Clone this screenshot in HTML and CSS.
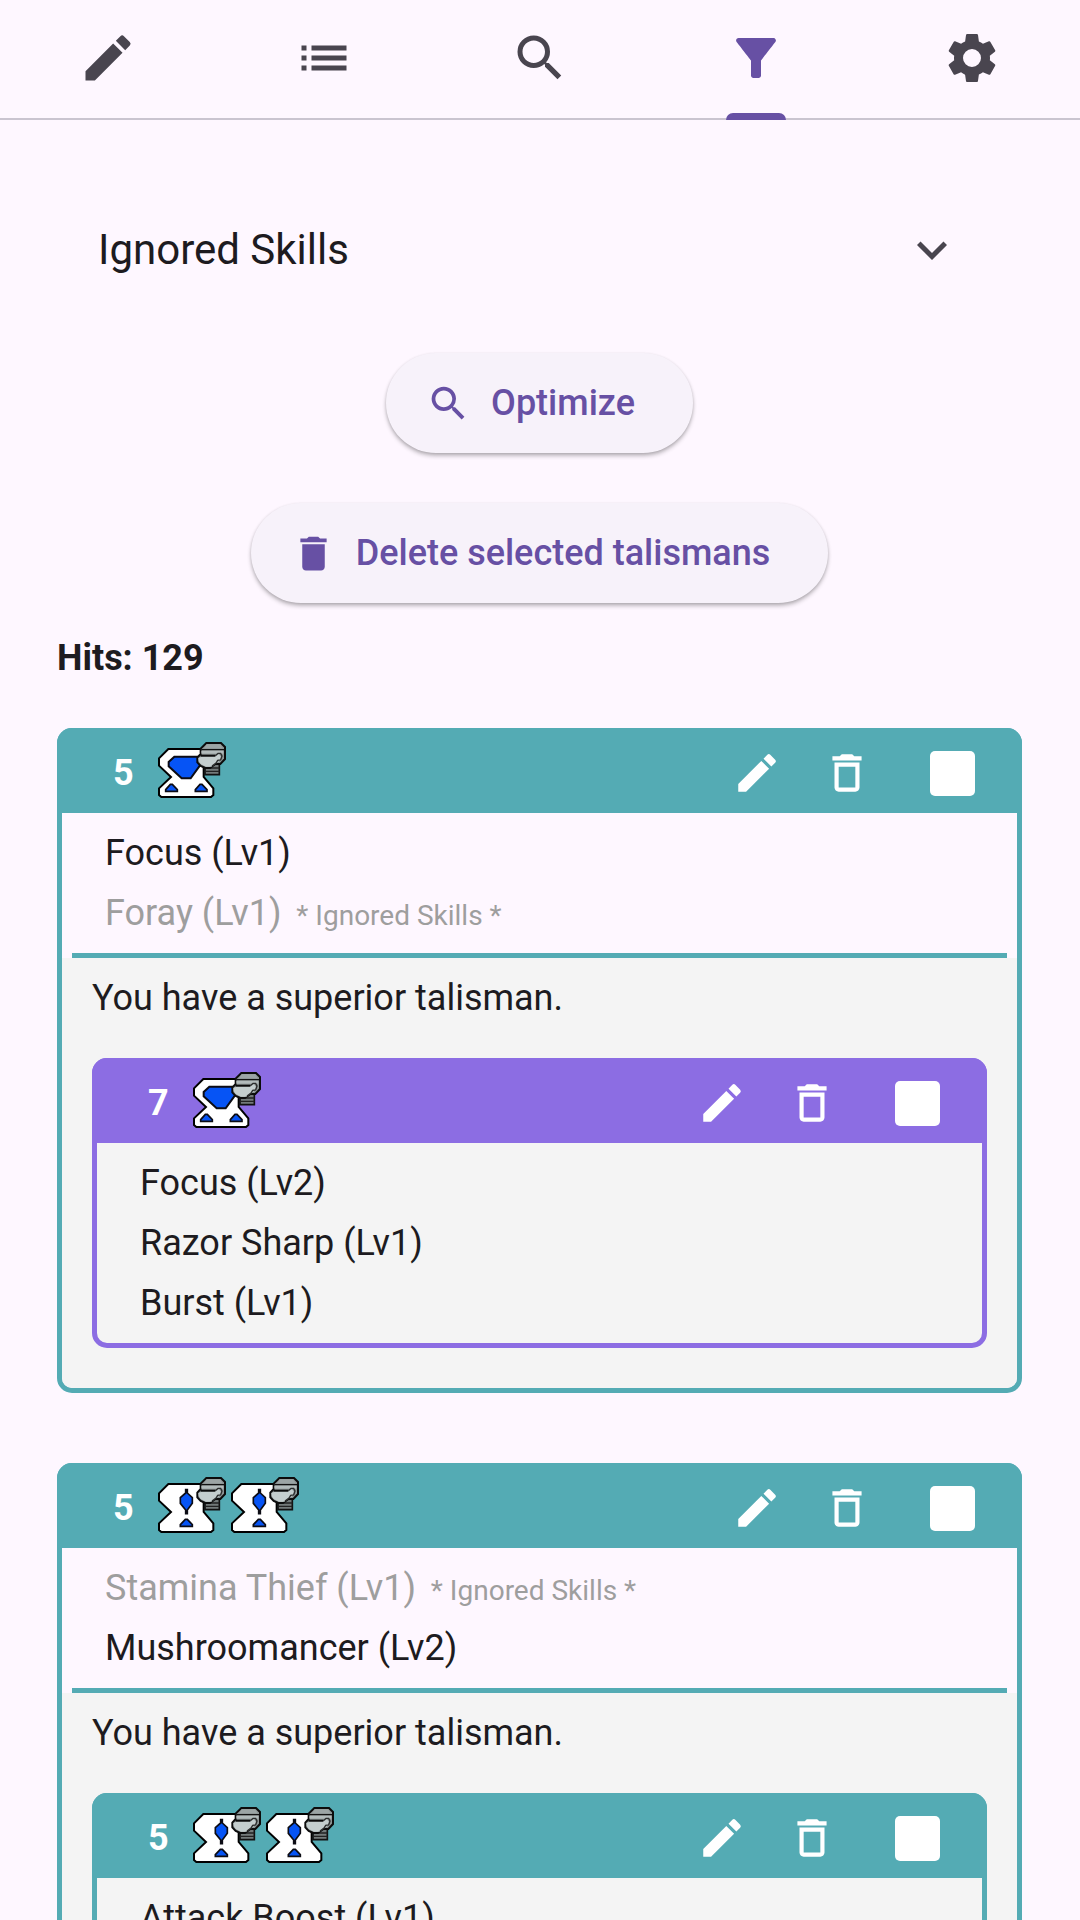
FILE: index.html
```html
<!DOCTYPE html>
<html lang="en">
<head>
<meta charset="utf-8">
<meta name="viewport" content="width=device-width, initial-scale=1">
<title>Talismans</title>
<link rel="stylesheet" href="styles.css">
</head>
<body>
<svg class="sprites" aria-hidden="true">
  <symbol id="pencil" viewBox="0 0 24 24"><path d="M3 17.25V21h3.75L17.81 9.94l-3.75-3.75L3 17.25zM20.71 7.04a1 1 0 0 0 0-1.41l-2.34-2.34a1 1 0 0 0-1.41 0l-1.83 1.83 3.75 3.75 1.83-1.83z"/></symbol>
  <symbol id="list" viewBox="0 0 24 24"><path d="M3 13h2v-2H3v2zm0 4h2v-2H3v2zm0-8h2V7H3v2zm4 4h14v-2H7v2zm0 4h14v-2H7v2zM7 7v2h14V7H7z"/></symbol>
  <symbol id="search" viewBox="0 0 24 24"><path d="M15.5 14h-.79l-.28-.27A6.47 6.47 0 0 0 16 9.5 6.5 6.5 0 1 0 9.500 16c1.610 0 3.090-.59 4.230-1.570l.27.28v.79l5 4.990L20.490 19l-4.990-5zm-6 0C7.010 14 5 11.990 5 9.500S7.010 5 9.500 5 14 7.010 14 9.500 11.990 14 9.500 14z"/></symbol>
  <symbol id="funnel" viewBox="0 0 24 24"><path d="M4.250 5.610C6.270 8.200 10 13 10 13v6c0 .55.45 1 1 1h2c.55 0 1-.45 1-1v-6s3.720-4.800 5.740-7.390A.998.998 0 0 0 18.950 4H5.040c-.83 0-1.300.95-.79 1.610z"/></symbol>
  <symbol id="gear" viewBox="0 0 24 24"><path d="M19.140 12.940c.04-.3.060-.61.060-.94 0-.32-.02-.64-.07-.94l2.030-1.580a.49.49 0 0 0 .12-.61l-1.920-3.320a.488.488 0 0 0-.59-.22l-2.390.96c-.5-.38-1.030-.7-1.620-.94l-.36-2.540a.484.484 0 0 0-.48-.41h-3.840c-.24 0-.43.17-.47.41l-.36 2.540c-.59.24-1.130.57-1.620.94l-2.390-.96c-.22-.08-.47 0-.59.22L2.740 8.870c-.12.21-.08.47.12.61l2.030 1.580c-.05.3-.09.63-.09.94s.02.64.07.94l-2.030 1.580a.49.49 0 0 0-.12.61l1.920 3.320c.12.22.37.29.59.22l2.390-.96c.5.38 1.030.7 1.620.94l.36 2.540c.05.24.24.41.48.41h3.840c.24 0 .44-.17.47-.41l.36-2.540c.59-.24 1.130-.56 1.620-.94l2.390.96c.22.08.47 0 .59-.22l1.920-3.320c.12-.22.070-.47-.12-.61l-2.010-1.580zM12 15.600A3.600 3.600 0 1 1 12 8.400a3.600 3.600 0 0 1 0 7.200z"/></symbol>
  <symbol id="chevron" viewBox="0 0 24 24"><path d="M16.590 8.590 12 13.170 7.410 8.590 6 10l6 6 6-6z"/></symbol>
  <symbol id="trash" viewBox="0 0 24 24"><path d="M6 19c0 1.100.9 2 2 2h8c1.100 0 2-.9 2-2V7H6v12zM19 4h-3.500l-1-1h-5l-1 1H5v2h14V4z"/></symbol>
  <symbol id="trash-outline" viewBox="0 0 24 24"><path d="M6 19c0 1.100.9 2 2 2h8c1.100 0 2-.9 2-2V7H6v12zM8 9h8v10H8V9zm7.500-5-1-1h-5l-1 1H5v2h14V4z"/></symbol>
  <symbol id="helmet" viewBox="24 20 204 168">
    <path d="M165 84h43v34h-43z" fill="#737a7a" stroke="#111" stroke-width="5"/>
    <path d="M166 98h42M166 108h42" stroke="#222" stroke-width="4"/>
    <path d="M169 23h44l12 12v36l-14 15h-15l-16 12h-14l-14-6-10-11V67l10-11V40z" fill="#8d9595" stroke="#0c0c0c" stroke-width="6"/>
    <path d="M154 43h68" stroke="#111" stroke-width="4"/>
    <path d="M170 27h40l8 12h-56z" fill="#9ca5a5"/>
    <path d="M154 46h66v9h-66z" fill="#b2bbbb"/>
    <path d="M145 68l10-4h38l14-7 6 8-5 12-24 17h-16l-16-8-6-9z" fill="#c4cece"/>
    <path d="M152 61h44" stroke="#0c0c0c" stroke-width="6"/>
    <path d="M196 61l8-7h8l4 8-4 12-9 1-5 8-12 9" fill="none" stroke="#2a2c2c" stroke-width="4"/>
  </symbol>
  <symbol id="slot-large" viewBox="24 20 204 168">
    <path d="M55 41h106v84l29 34v20l-7 6H34l-7-6v-20l36-34-36-34V69z" fill="#fff" stroke="#000" stroke-width="6"/>
    <path d="M73 64h77v26l-28 39H95L56 93V80z" fill="#0654f5" stroke="#0c0c14" stroke-width="6"/>
    <path d="M61 147h6l15 16v5H47v-5zM150 147h6l15 16v5h-35v-5z" fill="#0654f5" stroke="#0c0c14" stroke-width="5"/>
    <use href="#helmet" x="24" y="20" width="204" height="168"/>
  </symbol>
  <symbol id="slot-small" viewBox="24 20 204 168">
    <path d="M55 41h106v84l29 34v20l-7 6H34l-7-6v-20l36-34-36-34V69z" fill="#fff" stroke="#000" stroke-width="6"/>
    <path d="M107 58h5v10l15 14v17l-15 20v11h-5v-11L91 99V82l16-14z" fill="#0654f5" stroke="#0c0c14" stroke-width="5"/>
    <path d="M106 147h6l15 16v5H91v-5z" fill="#0654f5" stroke="#0c0c14" stroke-width="5"/>
    <use href="#helmet" x="24" y="20" width="204" height="168"/>
  </symbol>
</svg>

<div class="app">
  <nav class="tabs" aria-label="Sections">
    <a class="tab" href="#edit" aria-label="Edit"><svg><use href="#pencil"/></svg></a>
    <a class="tab" href="#all" aria-label="List"><svg><use href="#list"/></svg></a>
    <a class="tab" href="#find" aria-label="Search"><svg><use href="#search"/></svg></a>
    <a class="tab tab-active" href="#optimize" aria-label="Filter" aria-current="page"><svg><use href="#funnel"/></svg></a>
    <a class="tab" href="#settings" aria-label="Settings"><svg><use href="#gear"/></svg></a>
  </nav>

  <main class="page">
    <button class="expander" type="button" aria-expanded="false">
      <span>Ignored Skills</span>
      <svg><use href="#chevron"/></svg>
    </button>

    <div class="actions">
      <button class="pill" type="button"><svg><use href="#search"/></svg>Optimize</button>
      <button class="pill" type="button"><svg><use href="#trash"/></svg>Delete selected talismans</button>
    </div>

    <p class="hits">Hits: 129</p>

    <div class="cards">
      <article class="card">
        <header class="card-head">
          <span class="rarity">5</span>
          <span class="slots"><svg><use href="#slot-large"/></svg></span>
          <span class="tools">
            <button class="tool" type="button" aria-label="Edit"><svg><use href="#pencil"/></svg></button>
            <button class="tool" type="button" aria-label="Delete"><svg><use href="#trash-outline"/></svg></button>
            <input class="check" type="checkbox" aria-label="Select">
          </span>
        </header>
        <ul class="skills">
          <li>Focus (Lv1)</li>
          <li class="ignored">Foray (Lv1) <small>* Ignored Skills *</small></li>
        </ul>
        <hr class="rule">
        <section class="superior">
          <p class="note">You have a superior talisman.</p>
          <article class="card card-violet">
            <header class="card-head">
              <span class="rarity">7</span>
              <span class="slots"><svg><use href="#slot-large"/></svg></span>
              <span class="tools">
                <button class="tool" type="button" aria-label="Edit"><svg><use href="#pencil"/></svg></button>
                <button class="tool" type="button" aria-label="Delete"><svg><use href="#trash-outline"/></svg></button>
                <input class="check" type="checkbox" aria-label="Select">
              </span>
            </header>
            <ul class="skills">
              <li>Focus (Lv2)</li>
              <li>Razor Sharp (Lv1)</li>
              <li>Burst (Lv1)</li>
            </ul>
          </article>
        </section>
      </article>

      <article class="card">
        <header class="card-head">
          <span class="rarity">5</span>
          <span class="slots"><svg><use href="#slot-small"/></svg><svg><use href="#slot-small"/></svg></span>
          <span class="tools">
            <button class="tool" type="button" aria-label="Edit"><svg><use href="#pencil"/></svg></button>
            <button class="tool" type="button" aria-label="Delete"><svg><use href="#trash-outline"/></svg></button>
            <input class="check" type="checkbox" aria-label="Select">
          </span>
        </header>
        <ul class="skills">
          <li class="ignored">Stamina Thief (Lv1) <small>* Ignored Skills *</small></li>
          <li>Mushroomancer (Lv2)</li>
        </ul>
        <hr class="rule">
        <section class="superior">
          <p class="note">You have a superior talisman.</p>
          <article class="card">
            <header class="card-head">
              <span class="rarity">5</span>
              <span class="slots"><svg><use href="#slot-small"/></svg><svg><use href="#slot-small"/></svg></span>
              <span class="tools">
                <button class="tool" type="button" aria-label="Edit"><svg><use href="#pencil"/></svg></button>
                <button class="tool" type="button" aria-label="Delete"><svg><use href="#trash-outline"/></svg></button>
                <input class="check" type="checkbox" aria-label="Select">
              </span>
            </header>
            <ul class="skills">
              <li>Attack Boost (Lv1)</li>
            </ul>
          </article>
        </section>
      </article>
    </div>
  </main>
</div>
</body>
</html>
```
FILE: styles.css
```css
:root {
  --surface: #fef7ff;
  --ink: #1d1b20;
  --icon: #49454f;
  --primary: #6750a4;
  --teal: #54abb4;
  --violet: #8c6de3;
}

* { box-sizing: border-box; }

body {
  margin: 0;
  background: var(--surface);
  color: var(--ink);
  font: 400 36px/40px Roboto, sans-serif;
}

p, ul { margin: 0; padding: 0; }

button {
  border: 0;
  background: none;
  color: inherit;
  font: inherit;
  cursor: pointer;
}

svg { display: block; flex: none; fill: currentColor; }

.sprites { position: absolute; width: 0; height: 0; }

.app { display: flex; flex-direction: column; height: 100vh; }

/* top tabs */
.tabs {
  display: flex;
  flex: none;
  height: 120px;
  background: linear-gradient(#cac4d0, #cac4d0) bottom / 100% 2px no-repeat;
}

.tab {
  position: relative;
  flex: 1;
  display: flex;
  justify-content: center;
  padding-top: 28px;
  color: var(--icon);
}

.tab svg { width: 60px; height: 60px; }

.tab-active { color: var(--primary); }

.tab-active::after {
  content: "";
  position: absolute;
  bottom: 0;
  left: 50%;
  width: 60px;
  height: 7px;
  margin-left: -30px;
  border-radius: 7px 7px 0 0;
  background: var(--primary);
}

/* scrolling page */
.page {
  flex: 1;
  min-height: 0;
  overflow-y: auto;
  scrollbar-width: none;
  padding: 60px 58px 60px 57px;
}

.expander {
  display: flex;
  align-items: center;
  justify-content: space-between;
  width: 100%;
  height: 140px;
  padding: 0 60px 0 41px;
  font-size: 42px;
}

.expander svg { width: 60px; height: 60px; color: var(--icon); }

.actions {
  display: flex;
  flex-direction: column;
  align-items: center;
  gap: 50px;
  margin: 33px 0 35px;
}

.pill {
  display: flex;
  align-items: center;
  gap: 20px;
  height: 100px;
  padding: 0 58px 0 40px;
  border-radius: 50px;
  background: #f7f2fa;
  box-shadow: 0 3px 4px rgba(0, 0, 0, .24), 0 1px 3px rgba(0, 0, 0, .12);
  color: var(--primary);
  font-weight: 500;
}

.pill svg { width: 45px; height: 45px; }

.hits { margin-bottom: 50px; font-weight: 700; }

/* talisman cards */
.cards { display: flex; flex-direction: column; gap: 70px; }

.card {
  --accent: var(--teal);
  border: 5px solid var(--accent);
  border-radius: 15px;
}

.card-violet { --accent: var(--violet); }

/* the header covers the card's own top border */
.card-head {
  display: flex;
  align-items: center;
  height: 85px;
  margin: -5px -5px 0;
  padding: 5px 47px 0 56px;
  border-radius: 15px 15px 0 0;
  background: var(--accent);
  color: #fff;
}

.rarity { font-weight: 700; }

.slots { display: flex; gap: 5px; margin: 0 auto 6px 24px; }

.slots svg { width: 68px; height: 56px; }

.tools { display: flex; align-items: center; gap: 40px; }

.tool { padding: 0; }

.tool svg { width: 50px; height: 50px; }

.check {
  appearance: none;
  width: 45px;
  height: 45px;
  margin: 0 0 0 18px;
  border-radius: 5px;
  background: #fff;
}

.skills { padding: 10px 43px; list-style: none; line-height: 60px; }

.ignored { color: #9e9e9e; }

.ignored small { margin-left: 6px; font-size: 28px; line-height: 40px; }

.rule {
  height: 5px;
  margin: 0 10px;
  border: 0;
  background: var(--accent);
}

.superior { padding: 20px 30px 40px; border-radius: 0 0 10px 10px; background: #f4f4f4; }

.note { margin-bottom: 40px; }
```
